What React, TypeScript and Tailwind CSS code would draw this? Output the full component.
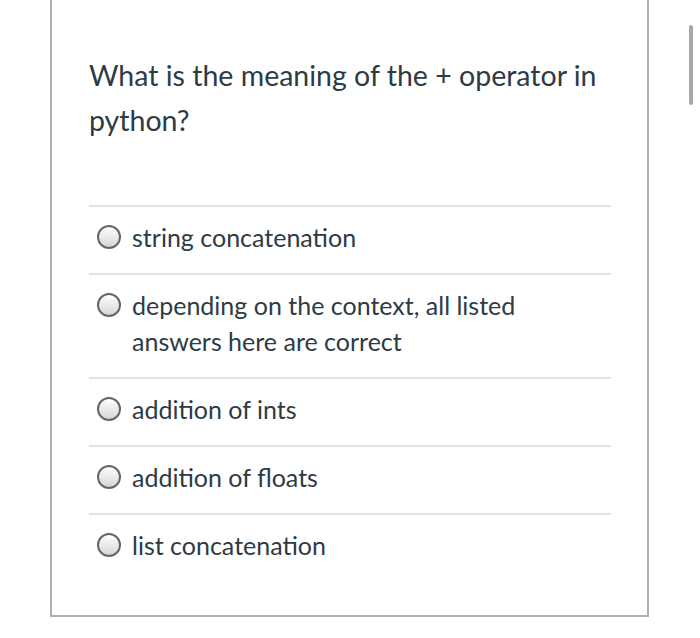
import React from 'react'

const options = [
  'string concatenation',
  'depending on the context, all listed answers here are correct',
  'addition of ints',
  'addition of floats',
  'list concatenation',
]

function Radio() {
  return (
    <span className="mt-[6px] block h-[24px] w-[24px] shrink-0 rounded-full border-2 border-[#666] bg-gradient-to-b from-white to-[#d6d6d6]" />
  )
}

export default function App() {
  return (
    <div className="relative h-[638px] w-[700px] overflow-hidden bg-white font-['Lato',sans-serif] text-[#2d3b45]">
      <div className="ml-[50px] w-[599px] border-x-2 border-b-2 border-[#b0b0b0] pb-[34px] pl-[37px] pr-[36px] pt-[53px]">
        <p className="text-[28.5px] leading-[45px]">
          What is the meaning of the + operator in python?
        </p>
        <div className="mt-[62px] border-t-2 border-[#e2e2e2]">
          {options.map((o) => (
            <label key={o} className="flex gap-[11px] border-b-2 border-[#e2e2e2] pb-[18px] pl-[8px] pt-[12px] last:border-b-0">
              <Radio />
              <span className="pr-[40px] text-[25px] leading-[36px]">{o}</span>
            </label>
          ))}
        </div>
      </div>
      <div className="absolute right-[7px] top-[25px] h-[80px] w-[4px] rounded-full bg-[#a8a8a8]" />
    </div>
  )
}
